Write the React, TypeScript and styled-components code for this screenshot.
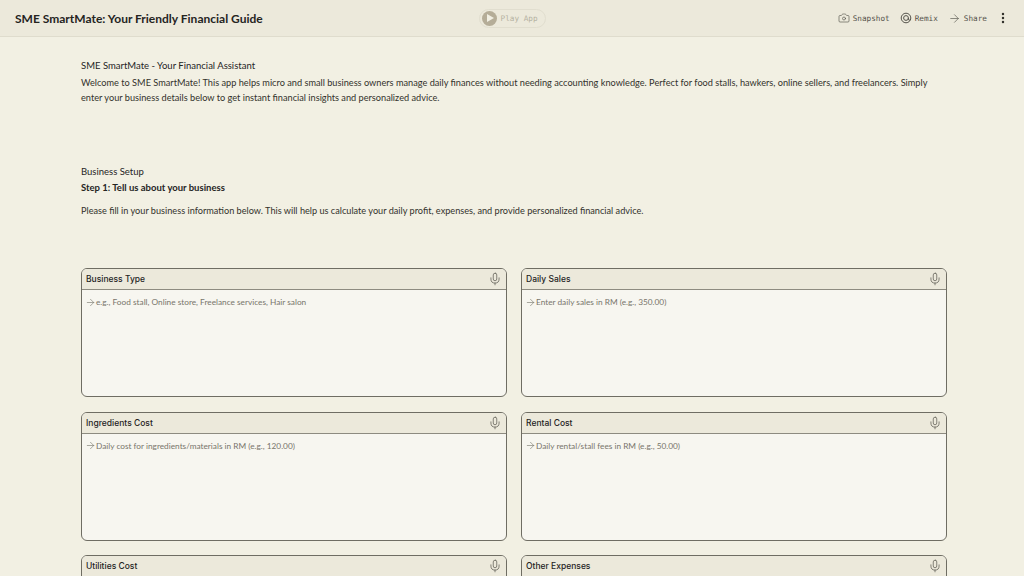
import React from 'react'
import styled, { createGlobalStyle } from 'styled-components'
import { Camera, ArrowRight, MoreVertical, Mic } from 'lucide-react'

const GlobalStyle = createGlobalStyle`
  html, body {
    margin: 0;
    height: 100%;
    overflow: hidden;
    background: #f2f0e3;
  }
  * {
    box-sizing: border-box;
  }
`

const fields = [
  { label: 'Business Type', hint: 'e.g., Food stall, Online store, Freelance services, Hair salon' },
  { label: 'Daily Sales', hint: 'Enter daily sales in RM (e.g., 350.00)' },
  { label: 'Ingredients Cost', hint: 'Daily cost for ingredients/materials in RM (e.g., 120.00)' },
  { label: 'Rental Cost', hint: 'Daily rental/stall fees in RM (e.g., 50.00)' },
  { label: 'Utilities Cost', hint: '' },
  { label: 'Other Expenses', hint: '' },
]

const RemixIcon = () => (
  <svg width="12" height="12" viewBox="0 0 12 12" fill="none" stroke="#55534b" strokeWidth="1">
    <circle cx="6" cy="6" r="4.8" />
    <circle cx="6" cy="6" r="2.4" />
    <path d="M8.4 6v1.2c0 1.2 1.6 1.2 2.4 0" />
  </svg>
)

const App: React.FC = () => (
  <Page>
    <GlobalStyle />
    <TopBar>
      <Title>SME SmartMate: Your Friendly Financial Guide</Title>
      <PlayButton>
        <PlayDisc>
          <svg width="8" height="8" viewBox="0 0 8 8">
            <path d="M1 0l7 4-7 4z" fill="#f1efe3" />
          </svg>
        </PlayDisc>
        Play App
      </PlayButton>
      <Actions>
        <Action>
          <Camera size={12} strokeWidth={1.3} />
          Snapshot
        </Action>
        <Action>
          <RemixIcon />
          Remix
        </Action>
        <Action>
          <ArrowRight size={13} strokeWidth={1.2} />
          Share
        </Action>
        <MoreButton>
          <MoreVertical size={14} color="#33322c" strokeWidth={2.2} />
        </MoreButton>
      </Actions>
    </TopBar>
    <Content>
      <Intro>
        <Line>SME SmartMate - Your Financial Assistant</Line>
        <Paragraph>
          Welcome to SME SmartMate! This app helps micro and small business owners manage daily finances without
          needing accounting knowledge. Perfect for food stalls, hawkers, online sellers, and freelancers. Simply
          enter your business details below to get instant financial insights and personalized advice.
        </Paragraph>
      </Intro>
      <Setup>
        <Line>Business Setup</Line>
        <StepTitle>Step 1: Tell us about your business</StepTitle>
        <Description>
          Please fill in your business information below. This will help us calculate your daily profit, expenses,
          and provide personalized financial advice.
        </Description>
      </Setup>
      <FieldGrid>
        {fields.map((field) => (
          <Field key={field.label}>
            <FieldHeader>
              {field.label}
              <Mic size={14} color="#55534b" strokeWidth={1.2} />
            </FieldHeader>
            <FieldBody>
              {field.hint && (
                <>
                  <HintArrow>
                    <ArrowRight size={11} strokeWidth={1.2} />
                  </HintArrow>
                  {field.hint}
                </>
              )}
            </FieldBody>
          </Field>
        ))}
      </FieldGrid>
    </Content>
  </Page>
)

const Page = styled.div`
  font-family: 'Lato', 'Noto Sans', sans-serif;
  color: #25241f;
`

const TopBar = styled.header`
  display: grid;
  grid-template-columns: 1fr auto 1fr;
  align-items: center;
  height: 37px;
  padding: 0 15px;
  background: #ece9db;
  border-bottom: 1px solid #dfdccd;
`

const Title = styled.h1`
  margin: 0;
  font-size: 12px;
  font-weight: 700;
  white-space: nowrap;
`

const PlayButton = styled.div`
  display: flex;
  align-items: center;
  gap: 4px;
  width: 67px;
  height: 19px;
  padding: 0 2px;
  border: 1px solid #e1decf;
  border-radius: 10px;
  font-family: 'DejaVu Sans Mono', monospace;
  font-size: 7.7px;
  color: #b5b2a2;
  white-space: nowrap;
`

const PlayDisc = styled.span`
  display: flex;
  align-items: center;
  justify-content: center;
  width: 15px;
  height: 15px;
  padding-left: 1px;
  border-radius: 50%;
  background: #b5ad98;
`

const Actions = styled.div`
  display: flex;
  align-items: center;
  justify-content: flex-end;
  gap: 10px;
  margin-right: -1px;
`

const Action = styled.span`
  display: flex;
  align-items: center;
  gap: 3px;
  font-family: 'DejaVu Sans Mono', monospace;
  font-size: 7.7px;
  color: #55534b;
  svg {
    color: #55534b;
  }
`

const MoreButton = styled.span`
  display: flex;
  margin-left: -1px;
`

const Content = styled.main`
  padding: 22px 77px 0 81px;
`

const Intro = styled.section`
  height: 106px;
`

const Line = styled.div`
  font-size: 9.5px;
  line-height: 13px;
`

const Paragraph = styled.p`
  margin: 4px 0 0;
  font-size: 9.2px;
  line-height: 14.5px;
  color: #33322c;
`

const Setup = styled.section`
  height: 103px;
`

const StepTitle = styled.div`
  margin-top: 3px;
  font-size: 9.5px;
  line-height: 13px;
  font-weight: 700;
`

const Description = styled.p`
  margin: 10px 0 0;
  font-size: 9.17px;
  line-height: 14px;
  color: #33322c;
`

const FieldGrid = styled.div`
  display: grid;
  grid-template-columns: 1fr 1fr;
  gap: 14.5px 14px;
`

const Field = styled.div`
  display: flex;
  flex-direction: column;
  height: 129px;
  background: #f7f6f0;
  border: 1px solid #6f6d63;
  border-radius: 6px;
  overflow: hidden;
`

const FieldHeader = styled.div`
  display: flex;
  align-items: center;
  justify-content: space-between;
  height: 21px;
  padding: 0 4px;
  flex-shrink: 0;
  background: #ece9db;
  border-bottom: 1px solid #8d8b80;
  font-family: 'Inter', 'Noto Sans', sans-serif;
  font-size: 8.5px;
  font-weight: 500;
`

const FieldBody = styled.div`
  display: flex;
  align-items: center;
  padding: 7px 4px;
  height: 24px;
  font-size: 8.28px;
  color: #77756b;
`

const HintArrow = styled.span`
  display: flex;
  margin-left: -1px;
  color: #66645a;
`

export default App
